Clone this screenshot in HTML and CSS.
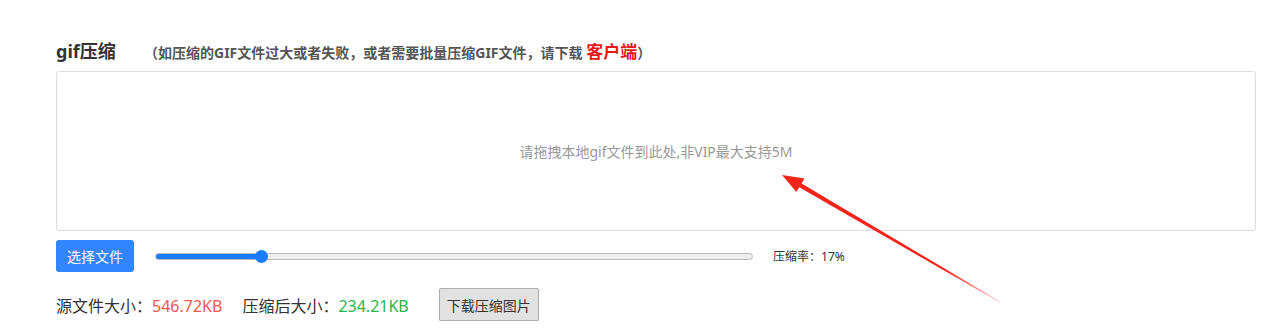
FILE: index.html
```html
<!DOCTYPE html>
<html lang="zh-CN">
<head>
  <meta charset="UTF-8" />
  <meta name="viewport" content="width=device-width, initial-scale=1.0" />
  <title>gif压缩</title>
  <link rel="stylesheet" href="styles.css">
</head>
<body>
  <div class="page">
    <div class="head">
      <h2>gif压缩</h2>
      <span class="tip">（如压缩的GIF文件过大或者失败，或者需要批量压缩GIF文件，请下载 <a href="#" class="client">客户端</a>）</span>
    </div>

    <div class="drop" id="dropZone">请拖拽本地gif文件到此处,非VIP最大支持5M</div>

    <div class="controls">
      <button class="pick">选择文件</button>
      <input type="range" class="rate" id="rate" min="0" max="100" value="17">
      <span class="rate-text">压缩率：<span id="rateVal">17</span>%</span>
    </div>

    <div class="sizes">
      <span>源文件大小：<span class="src">546.72KB</span></span>
      <span>压缩后大小：<span class="dst">234.21KB</span></span>
      <button class="download">下载压缩图片</button>
    </div>
  </div>

  <svg class="arrow" width="1284" height="334" viewBox="0 0 1284 334">
    <defs>
      <linearGradient id="fade" gradientUnits="userSpaceOnUse" x1="783" y1="175" x2="1000" y2="302">
        <stop offset="0" stop-color="#f5241b" />
        <stop offset="0.75" stop-color="#f5241b" />
        <stop offset="1" stop-color="#f5241b" stop-opacity="0.15" />
      </linearGradient>
    </defs>
    <polygon fill="url(#fade)" points="782,175 804.5,178.6 801.6,183.6 1000.3,301.6 999.7,302.4 799.2,187.3 796.4,192.1" />
  </svg>

  <script>
    const rate = document.getElementById('rate');
    rate.addEventListener('input', () => {
      document.getElementById('rateVal').innerText = rate.value;
    });
  </script>
</body>
</html>
```

FILE: styles.css
```css
body { margin: 0; background: #fff; font-family: "Noto Sans", "Noto Sans CJK SC", sans-serif; color: #333; }
.page { padding: 36px 28px 0 56px; }

.head { display: flex; align-items: center; height: 28px; }
.head h2 { margin: 0; font-size: 18px; font-weight: bold; color: #333; width: 80px; }
.tip { font-size: 14px; font-weight: bold; color: #555; margin-left: 8px; }
.client { color: #e4191b; font-size: 17px; text-decoration: none; }

.drop {
  margin-top: 7px;
  height: 158px;
  border: 1px solid #ddd;
  border-radius: 3px;
  display: flex;
  align-items: center;
  justify-content: center;
  font-size: 14px;
  color: #999;
}

.controls { display: flex; align-items: center; margin-top: 9px; height: 32px; }
.pick {
  width: 78px;
  height: 32px;
  border: none;
  border-radius: 3px;
  background: #3385ff;
  color: #fff;
  font-size: 14px;
  font-family: inherit;
  cursor: pointer;
}

.rate {
  -webkit-appearance: none;
  appearance: none;
  width: 598px;
  height: 7px;
  margin: 0 0 0 21px;
  border: 1px solid #b8b8b8;
  border-radius: 4px;
  background: linear-gradient(to right, #1a7cff 0, #1a7cff 18%, #efefef 18%);
  outline: none;
  box-sizing: border-box;
}
.rate::-webkit-slider-thumb {
  -webkit-appearance: none;
  width: 13px;
  height: 13px;
  border-radius: 50%;
  background: #1a7cff;
  border: none;
  cursor: pointer;
}
.rate-text { font-size: 12px; color: #333; margin-left: 20px; }

.sizes { display: flex; align-items: center; margin-top: 16px; font-size: 16px; color: #333; }
.sizes > span { margin-right: 20px; }
.src { color: #f2574a; }
.dst { color: #2cb24f; }
.download {
  margin-left: 10px;
  width: 100px;
  height: 33px;
  background: #e1e1e1;
  border: 1px solid #adadad;
  border-radius: 2px;
  box-shadow: 0 1px 1px rgba(0, 0, 0, 0.15);
  font-size: 14px;
  font-family: inherit;
  color: #333;
  cursor: pointer;
}

.arrow { position: absolute; left: 0; top: 0; pointer-events: none; }
```
